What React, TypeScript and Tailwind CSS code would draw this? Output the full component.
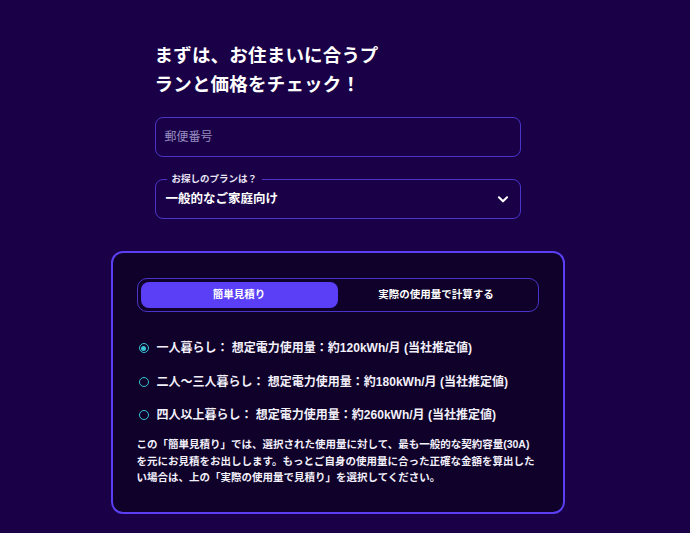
import { useState } from "react";

const plans = [
  { id: "one", label: "一人暮らし：", usage: "想定電力使用量：約120kWh/月 (当社推定値)" },
  { id: "two", label: "二人〜三人暮らし：", usage: "想定電力使用量：約180kWh/月 (当社推定値)" },
  { id: "four", label: "四人以上暮らし：", usage: "想定電力使用量：約260kWh/月 (当社推定値)" },
];

export default function App() {
  const [tab, setTab] = useState(0);
  const [plan, setPlan] = useState("one");

  return (
    <div
      className="min-h-[533px] w-full bg-[#1a0147] text-white"
      style={{ fontFamily: '"Liberation Sans", "Noto Sans CJK JP", sans-serif' }}
    >
      <div className="flex flex-col items-center pt-[41px] pr-[15px]">
        <div className="w-[366px]">
          <h1 className="text-[18.5px] font-bold leading-[29px] tracking-[0.2px]">
            まずは、お住まいに合うプ
            <br />
            ランと価格をチェック！
          </h1>

          <div className="mt-[18px] flex h-[40px] items-center rounded-[8px] border border-[#4935c8] px-[9px]">
            <span className="text-[12px] text-[#968cc0]">郵便番号</span>
          </div>

          <div className="relative mt-[22px] flex h-[40px] items-center justify-between rounded-[8px] border border-[#4935c8] pl-[10px] pr-[10px]">
            <span className="absolute left-[11px] top-[-8px] bg-[#1a0147] px-[5px] text-[9.5px] font-bold leading-[14px] text-[#e8e4f5]">
              お探しのプランは？
            </span>
            <span className="text-[12.5px] font-bold text-white">一般的なご家庭向け</span>
            <svg width="14" height="14" viewBox="0 0 24 24" fill="none" stroke="white" strokeWidth="3.5" strokeLinecap="round" strokeLinejoin="round">
              <path d="M5 9l7 7 7-7" />
            </svg>
          </div>
        </div>

        <div className="mt-[32px] w-[454px] rounded-[12px] border-2 border-[#5a40f2] bg-[#0f0129] px-[24px] pt-[25px] pb-[26px]">
          <div className="flex h-[34px] items-center rounded-[10px] border border-[#4935c8] p-[3px]">
            {["簡単見積り", "実際の使用量で計算する"].map((t, i) => (
              <button
                key={t}
                onClick={() => setTab(i)}
                className={
                  i === tab
                    ? "flex h-full flex-1 items-center justify-center rounded-[8px] bg-[#5a3ff7] text-[10.5px] font-bold text-white"
                    : "flex h-full flex-1 items-center justify-center rounded-[8px] text-[10.5px] font-bold text-white"
                }
              >
                {t}
              </button>
            ))}
          </div>

          <div className="mt-[27px] flex flex-col gap-[15.5px] pl-[2px]">
            {plans.map((p) => (
              <label key={p.id} className="flex cursor-pointer items-center gap-[8px]" onClick={() => setPlan(p.id)}>
                <span className="flex h-[10px] w-[10px] items-center justify-center rounded-full border-[1.5px] border-[#38c6d6]">
                  {plan === p.id && <span className="h-[5px] w-[5px] rounded-full bg-[#38c6d6]" />}
                </span>
                <span className="text-[12px] font-bold leading-[18px] text-[#f2f0fa]">
                  {p.label} {p.usage}
                </span>
              </label>
            ))}
          </div>

          <p className="mt-[12px] text-[10.5px] font-bold leading-[16.5px] text-[#f2f0fa]">
            この「簡単見積り」では、選択された使用量に対して、最も一般的な契約容量(30A)を元にお見積をお出しします。もっとご自身の使用量に合った正確な金額を算出したい場合は、上の「実際の使用量で見積り」を選択してください。
          </p>
        </div>
      </div>
    </div>
  );
}
